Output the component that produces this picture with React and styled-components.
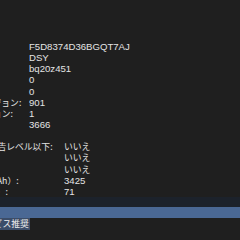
import React from 'react';
import styled, { createGlobalStyle } from 'styled-components';

const GlobalStyle = createGlobalStyle`
  html, body {
    margin: 0;
    padding: 0;
    background: #1f1f1f;
  }
  body {
    width: 240px;
    height: 240px;
    overflow: hidden;
  }
`;

const Page = styled.div`
  width: 240px;
  height: 240px;
  overflow: hidden;
  background: #1f1f1f;
  color: #e4e4e4;
  padding-top: 41px;
  box-sizing: border-box;
`;

const Group = styled.div`
  display: flex;
  flex-direction: column;
  margin-bottom: ${p => p.$after || 0}px;
`;

const Row = styled.div`
  display: flex;
  align-items: baseline;
  height: 11.15px;
  line-height: 11.15px;
  white-space: nowrap;
`;

const Label = styled.div`
  flex: 0 0 ${p => p.$col}px;
  overflow: hidden;
  text-indent: ${p => p.$indent}px;
  font-family: "Noto Sans CJK JP", sans-serif;
  font-size: 8.8px;
`;

const Value = styled.div`
  font-family: "Liberation Sans", "Noto Sans CJK JP", sans-serif;
  font-size: 9.6px;
`;

const Jp = styled.span`
  font-family: "Noto Sans CJK JP", sans-serif;
  font-size: 8.8px;
`;

const Band = styled.div`
  height: 9.5px;
  background: #1c222b;
`;

const Bar = styled.div`
  height: 11px;
  background: #4a6894;
`;

const StatusRow = styled.div`
  display: flex;
  align-items: center;
  height: 12px;
  margin-top: 0.5px;
`;

const Selected = styled.span`
  margin-left: -24px;
  padding-right: 1px;
  background: #3c4d68;
  font-family: "Noto Sans CJK JP", sans-serif;
  font-size: 8.8px;
  line-height: 12px;
  color: #f0f0f0;
`;

const modelInfo = [
  ['シリアル番号:', 'F5D8374D36BGQT7AJ'],
  ['製造元:', 'DSY'],
  ['デバイス名:', 'bq20z451'],
  ['ピンの構成:', '0'],
  ['チップセット:', '0'],
  ['ファームウェアのバージョン:', '901'],
  ['ハードウェアのリビジョン:', '1'],
  ['セルのリビジョン:', '3666'],
];

const chargeInfo = [
  ['残りの充電量が警告レベル以下:', 'いいえ', true],
  ['フル充電済み:', 'いいえ', true],
  ['充電中:', 'いいえ', true],
  ['フル充電容量（mAh）:', '3425'],
  ['現在の充電量（%）:', '71'],
];

const InfoGroup = ({ rows, col, indent, after }) => (
  <Group $after={after}>
    {rows.map(([label, value, jp]) => (
      <Row key={label}>
        <Label $col={col} $indent={indent}>{label}</Label>
        <Value>{jp ? <Jp>{value}</Jp> : value}</Value>
      </Row>
    ))}
  </Group>
);

const App = () => {
  return (
    <>
      <GlobalStyle />
      <Page>
        <InfoGroup rows={modelInfo} col={29} indent={-95} after={11.2} />
        <InfoGroup rows={chargeInfo} col={64} indent={-73} />
        <Band />
        <Bar />
        <StatusRow>
          <Selected>サービス推奨</Selected>
        </StatusRow>
      </Page>
    </>
  );
};

export default App;
